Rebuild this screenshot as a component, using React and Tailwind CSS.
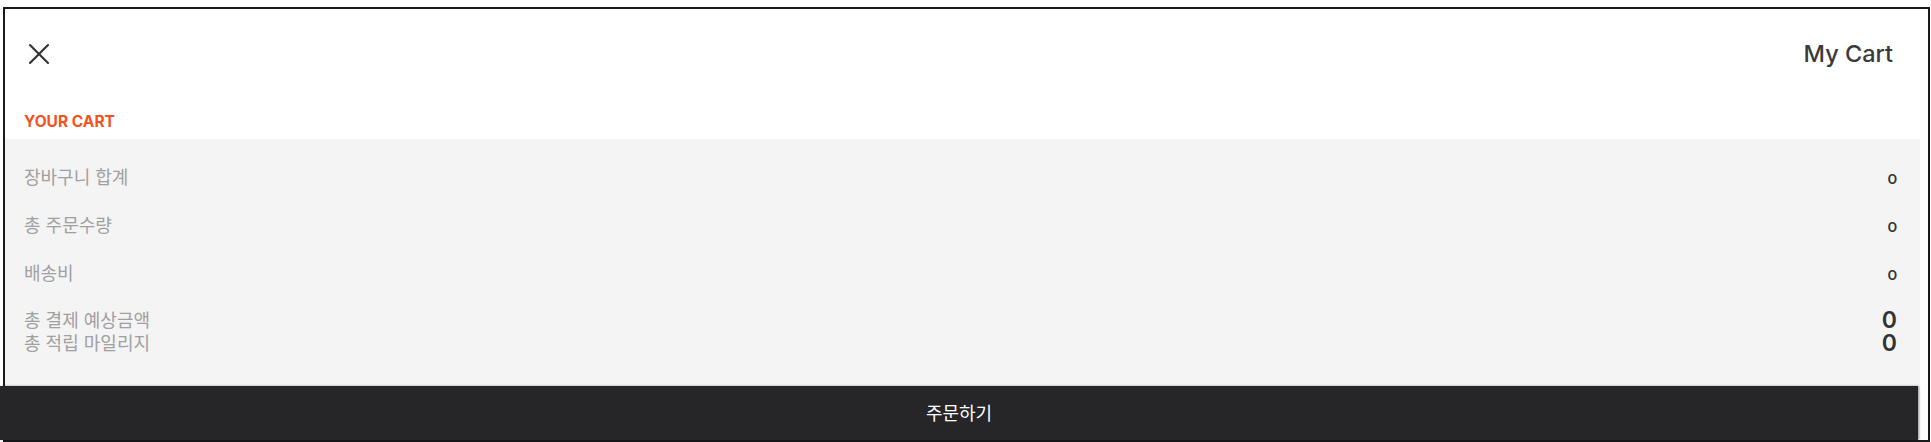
import { X } from 'lucide-react';

const sans = "font-['Inter','Noto_Sans_CJK_KR',sans-serif]";

function Row({ label, value }) {
  return (
    <div className="flex h-[48px] items-center justify-between">
      <span className="text-[18px] leading-[22px] text-[#a0a0a0]">{label}</span>
      <span className="text-[17px] leading-[22px] font-semibold text-[#333] oldstyle-nums font-['Lato','Noto_Sans',sans-serif]">
        {value}
      </span>
    </div>
  );
}

export default function App() {
  return (
    <div className={`relative h-[442px] w-[1931px] overflow-hidden bg-white ${sans}`}>
      {/* drawer panel */}
      <div className="mt-[7px] ml-[3px] mr-[1px] h-[435px] border-2 border-[#1a1a1a] bg-white">
        {/* header */}
        <div className="flex h-[90px] items-center justify-between pl-[16px] pr-[35px]">
          <button className="text-[#333]">
            <X size={36} strokeWidth={1.4} />
          </button>
          <h1 className="text-[23.5px] font-medium text-[#3a3a3a]">My Cart</h1>
        </div>

        <div className="pl-[19px] pt-[13px] pb-[7px] text-[15.5px] font-bold leading-[20px] text-[#f4511e]">
          YOUR CART
        </div>

        {/* summary */}
        <div className="mr-[8px] h-[300px] bg-[#f4f4f4] pl-[19px] pr-[23px] pt-[15px]">
          <Row label="장바구니 합계" value="0" />
          <Row label="총 주문수량" value="0" />
          <Row label="배송비" value="0" />
          <div className="mt-[11px] flex justify-between">
            <div className="text-[18px] leading-[23px] text-[#a0a0a0]">
              <div>총 결제 예상금액</div>
              <div>총 적립 마일리지</div>
            </div>
            <div className="text-right text-[23px] font-semibold leading-[23px] text-[#333]">
              <div>0</div>
              <div>0</div>
            </div>
          </div>
        </div>
      </div>

      {/* fixed order button */}
      <button className="absolute bottom-[2px] left-0 h-[54px] w-[1918px] bg-[#262628] text-[18px] text-white shadow-[1px_0_2px_rgba(0,0,0,0.4)]">
        주문하기
      </button>
    </div>
  );
}
